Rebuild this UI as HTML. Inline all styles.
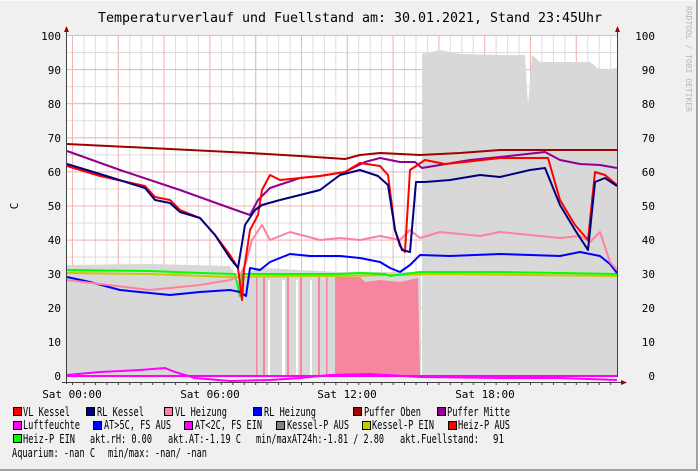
<!DOCTYPE html>
<html><head><meta charset="utf-8"><style>
html,body{margin:0;padding:0;background:#f0f0f0;}
svg{display:block;}
text{font-family:"DejaVu Sans Mono","Liberation Mono",monospace;fill:#000;white-space:pre;}
</style></head><body>
<svg width="698" height="471" viewBox="0 0 698 471" xmlns="http://www.w3.org/2000/svg">
<defs>
<pattern id="gv" x="72" y="0" width="11.45" height="471" patternUnits="userSpaceOnUse"><rect x="0" y="0" width="1" height="471" fill="#dcdcdc"/></pattern>
<pattern id="gh" x="0" y="376" width="698" height="17.05" patternUnits="userSpaceOnUse"><rect x="0" y="0" width="698" height="1" fill="#dcdcdc"/></pattern>
<pattern id="mv" x="72" y="0" width="45.8" height="471" patternUnits="userSpaceOnUse"><rect x="0" y="0" width="1" height="471" fill="#f4b4b4"/></pattern>
<pattern id="mh" x="0" y="376" width="698" height="34.1" patternUnits="userSpaceOnUse"><rect x="0" y="0" width="698" height="1" fill="#f4b4b4"/></pattern>
<pattern id="tk" x="72" y="0" width="11.45" height="471" patternUnits="userSpaceOnUse"><rect x="0" y="0" width="1" height="471" fill="#404040"/></pattern>
</defs>
<rect x="0" y="0" width="698" height="471" fill="#f0f0f0"/>
<rect x="0" y="0" width="698" height="1" fill="#fcfcfc"/>
<rect x="696" y="0" width="2" height="471" fill="#a0a0a0"/>
<rect x="0" y="469" width="698" height="2" fill="#a0a0a0"/>
<rect x="67" y="35" width="550" height="342" fill="#fff"/>
<rect x="67" y="35" width="550" height="342" fill="url(#gv)"/>
<rect x="67" y="35" width="550" height="342" fill="url(#gh)"/>
<rect x="67" y="35" width="550" height="342" fill="url(#mv)"/>
<rect x="67" y="35" width="550" height="342" fill="url(#mh)"/>
<polygon fill="#d8d8d8" points="67,376 67,265 150,264 230,266 240,285 250,272 260,268 300,270 340,272 380,272 421,272 421,376"/>
<polygon fill="#d8d8d8" points="422,376 422,54 440,50 460,54 500,55 525,55 528,105 532,55 540,62 570,62 590,62 600,70 617,68 617,376"/>
<g fill="#fff"><rect x="268" y="280" width="2" height="96"/><rect x="282" y="280" width="3" height="96"/><rect x="296" y="280" width="2" height="96"/><rect x="310" y="280" width="2" height="96"/></g>
<g fill="#f7859f">
<rect x="256" y="276" width="1.5" height="100"/><rect x="263" y="276" width="2" height="100"/><rect x="287" y="276" width="2" height="100"/><rect x="300" y="276" width="2" height="100"/><rect x="318" y="276" width="2" height="100"/><rect x="326" y="276" width="1.5" height="100"/>
<polygon points="335,376 335,277 360,277 365,282 380,280 400,282 418,278 420,376"/>
</g>
<g fill="none" stroke-width="2" stroke-linejoin="round">
<polyline stroke="#ff00ff" points="67,376 617,376"/>
<polyline stroke="#ff00ff" points="67,375 100,372 140,370 165,368 175,372 195,378 230,381 270,380 300,378 330,375 370,374 420,377 500,378 560,378 617,380"/>
<polyline stroke="#c8c800" points="67,273 150,274 230,277 300,276 340,276 440,274 617,276"/>
<polyline stroke="#00ff00" points="67,270 150,271 200,273 235,274 240,296 242,274 300,274 340,274 360,273 385,274 390,276 420,272 500,272 617,274"/>
<polyline stroke="#0000ff" points="67,277 90,282 120,290 170,295 200,292 230,290 240,292 246,296 250,268 260,270 270,262 290,254 310,256 340,256 360,258 380,262 390,268 400,272 410,265 420,255 450,256 500,254 560,256 580,252 600,256 610,264 617,273"/>
<polyline stroke="#ff80a0" points="67,280 100,284 150,290 200,285 230,280 240,276 246,262 252,240 262,225 270,240 290,232 320,240 340,238 360,240 380,236 400,240 410,230 420,238 440,232 480,236 500,232 540,236 560,238 580,236 590,242 600,232 610,262 617,270"/>
<polyline stroke="#900090" points="67,151 120,170 180,190 230,208 250,215 258,200 270,188 300,178 320,176 345,172 365,162 380,158 400,162 415,162 422,168 440,165 470,160 500,157 545,152 560,160 580,164 600,165 617,168"/>
<polyline stroke="#a00000" points="67,144 150,148 250,153 300,156 345,159 360,155 380,153 420,155 460,153 500,150 617,150"/>
<polyline stroke="#ff0000" points="67,166 100,176 145,186 155,197 170,200 180,210 200,218 215,235 230,255 238,268 242,300 244,270 250,230 258,215 262,190 270,175 280,180 300,178 320,176 345,172 360,163 380,166 388,175 395,230 400,246 405,252 410,170 425,160 445,164 465,162 500,158 530,158 548,158 560,200 575,225 588,240 595,172 605,175 617,185"/>
<polyline stroke="#000080" points="67,164 100,174 145,188 155,200 170,203 180,212 200,218 215,235 230,258 238,268 245,225 255,210 262,205 280,200 300,195 320,190 340,175 360,170 378,176 388,185 395,230 402,250 410,252 416,182 425,182 450,180 480,175 500,177 530,170 545,168 560,205 575,230 588,250 595,182 605,178 617,186"/>
</g>
<rect x="67" y="383" width="550" height="2" fill="url(#tk)"/>
<rect x="66" y="32" width="1" height="352" fill="#404040"/>
<rect x="617" y="32" width="1" height="345" fill="#404040"/>
<rect x="62" y="382" width="559" height="1" fill="#404040"/>
<polygon points="64,32 69,32 66.5,26" fill="#a00000"/>
<polygon points="615,32 620,32 617.5,26" fill="#a00000"/>
<polygon points="621,380 621,385 627,382.5" fill="#a00000"/>
<g font-size="11" text-anchor="end">
<text x="61" y="40">100</text><text x="61" y="74">90</text><text x="61" y="108">80</text><text x="61" y="142">70</text><text x="61" y="176">60</text><text x="61" y="210">50</text><text x="61" y="244">40</text><text x="61" y="278">30</text><text x="61" y="312">20</text><text x="61" y="346">10</text><text x="61" y="380">0</text>
<text x="655" y="40">100</text><text x="655" y="74">90</text><text x="655" y="108">80</text><text x="655" y="142">70</text><text x="655" y="176">60</text><text x="655" y="210">50</text><text x="655" y="244">40</text><text x="655" y="278">30</text><text x="655" y="312">20</text><text x="655" y="346">10</text><text x="655" y="380">0</text>
</g>
<text x="18" y="206" font-size="11" transform="rotate(-90 18 206)" text-anchor="middle">C</text>
<text x="686" y="6" font-size="8" style="fill:#b8b8b8" transform="rotate(90 686 6)">RRDTOOL / TOBI OETIKER</text>
<g font-size="11" text-anchor="middle">
<text x="72" y="398">Sat 00:00</text><text x="210" y="398">Sat 06:00</text><text x="347" y="398">Sat 12:00</text><text x="485" y="398">Sat 18:00</text>
</g>
<text x="98" y="22" font-size="13" textLength="504" lengthAdjust="spacingAndGlyphs">Temperaturverlauf und Fuellstand am: 30.01.2021, Stand 23:45Uhr</text>
<g stroke="#000" stroke-width="1">
<rect x="13.5" y="407.5" width="8" height="8" fill="#ff0000"/>
<rect x="86.5" y="407.5" width="8" height="8" fill="#000080"/>
<rect x="164.5" y="407.5" width="8" height="8" fill="#ff80a0"/>
<rect x="253.5" y="407.5" width="8" height="8" fill="#0000ff"/>
<rect x="353.5" y="407.5" width="8" height="8" fill="#a00000"/>
<rect x="437.5" y="407.5" width="8" height="8" fill="#900090"/>
<rect x="13.5" y="421.5" width="8" height="8" fill="#ff00ff"/>
<rect x="93.5" y="421.5" width="8" height="8" fill="#0000ff"/>
<rect x="184.5" y="421.5" width="8" height="8" fill="#ff00ff"/>
<rect x="276.5" y="421.5" width="8" height="8" fill="#808080"/>
<rect x="362.5" y="421.5" width="8" height="8" fill="#c8c800"/>
<rect x="448.5" y="421.5" width="8" height="8" fill="#ff0000"/>
<rect x="13.5" y="434.5" width="8" height="8" fill="#00ff00"/>
</g>
<g font-size="12">
<text x="23" y="416" textLength="47" lengthAdjust="spacingAndGlyphs">VL Kessel</text>
<text x="97" y="416" textLength="47" lengthAdjust="spacingAndGlyphs">RL Kessel</text>
<text x="175" y="416" textLength="52" lengthAdjust="spacingAndGlyphs">VL Heizung</text>
<text x="264" y="416" textLength="52" lengthAdjust="spacingAndGlyphs">RL Heizung</text>
<text x="364" y="416" textLength="57" lengthAdjust="spacingAndGlyphs">Puffer Oben</text>
<text x="447" y="416" textLength="63" lengthAdjust="spacingAndGlyphs">Puffer Mitte</text>
<text x="23" y="429" textLength="57" lengthAdjust="spacingAndGlyphs">Luftfeuchte</text>
<text x="104" y="429" textLength="67" lengthAdjust="spacingAndGlyphs">AT&gt;5C, FS AUS</text>
<text x="195" y="429" textLength="67" lengthAdjust="spacingAndGlyphs">AT&lt;2C, FS EIN</text>
<text x="287" y="429" textLength="62" lengthAdjust="spacingAndGlyphs">Kessel-P AUS</text>
<text x="372" y="429" textLength="62" lengthAdjust="spacingAndGlyphs">Kessel-P EIN</text>
<text x="458" y="429" textLength="52" lengthAdjust="spacingAndGlyphs">Heiz-P AUS</text>
<text x="23" y="443" textLength="52" lengthAdjust="spacingAndGlyphs">Heiz-P EIN</text>
<text x="90" y="443" textLength="62" lengthAdjust="spacingAndGlyphs">akt.rH: 0.00</text>
<text x="168" y="443" textLength="73" lengthAdjust="spacingAndGlyphs">akt.AT:-1.19 C</text>
<text x="256" y="443" textLength="128" lengthAdjust="spacingAndGlyphs">min/maxAT24h:-1.81 / 2.80</text>
<text x="400" y="443" textLength="79" lengthAdjust="spacingAndGlyphs">akt.Fuellstand:</text>
<text x="493" y="443" textLength="11" lengthAdjust="spacingAndGlyphs">91</text>
<text x="12" y="457" textLength="83" lengthAdjust="spacingAndGlyphs">Aquarium: -nan C</text>
<text x="108" y="457" textLength="99" lengthAdjust="spacingAndGlyphs">min/max: -nan/ -nan</text>
</g>
</svg>
</body></html>
